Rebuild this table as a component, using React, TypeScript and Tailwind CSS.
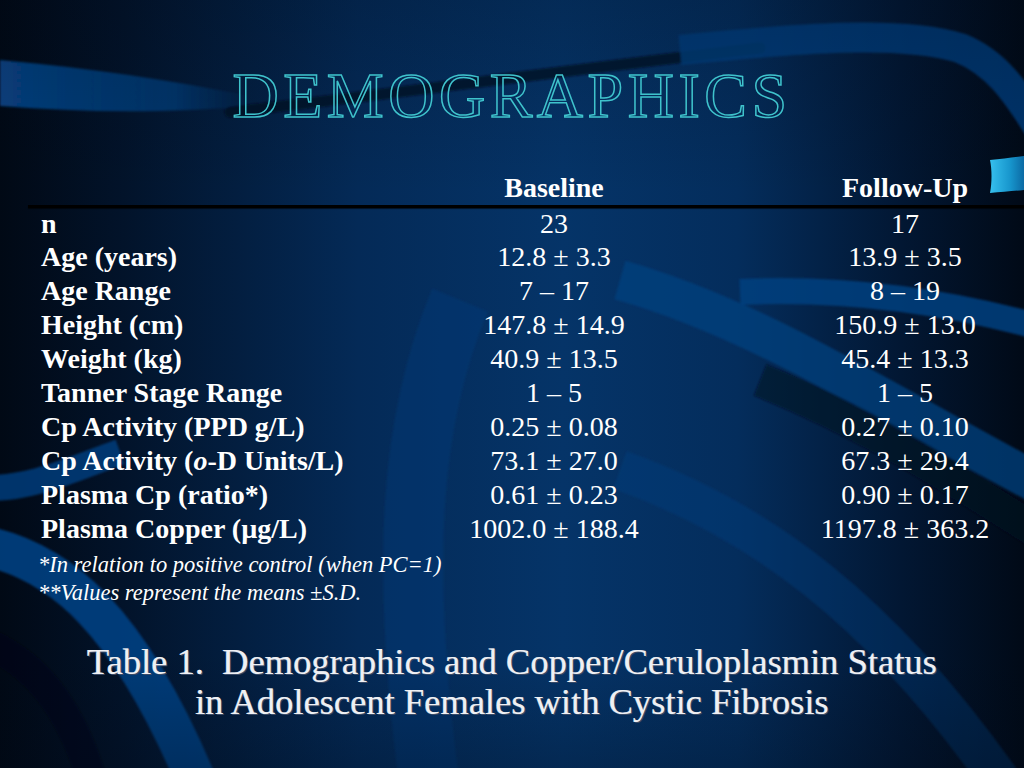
import React from "react";

const rows: [React.ReactNode, string, string][] = [
  ["n", "23", "17"],
  ["Age (years)", "12.8 ± 3.3", "13.9 ± 3.5"],
  ["Age Range", "7 – 17", "8 – 19"],
  ["Height (cm)", "147.8 ± 14.9", "150.9 ± 13.0"],
  ["Weight (kg)", "40.9 ± 13.5", "45.4 ± 13.3"],
  ["Tanner Stage Range", "1 – 5", "1 – 5"],
  ["Cp Activity (PPD g/L)", "0.25 ± 0.08", "0.27 ± 0.10"],
  [
    <>
      Cp Activity (<i>o</i>-D Units/L)
    </>,
    "73.1 ± 27.0",
    "67.3 ± 29.4",
  ],
  ["Plasma Cp (ratio*)", "0.61 ± 0.23", "0.90 ± 0.17"],
  ["Plasma Copper (µg/L)", "1002.0 ± 188.4", "1197.8 ± 363.2"],
];

function Background() {
  return (
    <svg
      className="absolute inset-0"
      width="1024"
      height="768"
      viewBox="0 0 1024 768"
    >
      <defs>
        <linearGradient id="base" x1="0" y1="0" x2="1" y2="0">
          <stop offset="0" stopColor="#010915" />
          <stop offset="0.12" stopColor="#02132a" />
          <stop offset="0.35" stopColor="#042a57" />
          <stop offset="0.55" stopColor="#053468" />
          <stop offset="0.72" stopColor="#042d5c" />
          <stop offset="0.88" stopColor="#021733" />
          <stop offset="1" stopColor="#010a17" />
        </linearGradient>
        <linearGradient id="vshade" x1="0" y1="0" x2="0" y2="1">
          <stop offset="0" stopColor="#000814" stopOpacity="0.2" />
          <stop offset="0.25" stopColor="#000814" stopOpacity="0" />
          <stop offset="0.85" stopColor="#000814" stopOpacity="0" />
          <stop offset="1" stopColor="#000814" stopOpacity="0.25" />
        </linearGradient>
        <linearGradient id="fadeL" x1="0" y1="0" x2="1" y2="0">
          <stop offset="0" stopColor="#074283" stopOpacity="1" />
          <stop offset="0.7" stopColor="#074283" stopOpacity="0.7" />
          <stop offset="1" stopColor="#074283" stopOpacity="0" />
        </linearGradient>
        <filter id="soft" x="-10%" y="-10%" width="120%" height="120%">
          <feGaussianBlur stdDeviation="1" />
        </filter>
      </defs>
      <rect width="1024" height="768" fill="url(#base)" />
      <g filter="url(#soft)">
        {/* top-left band */}
        <path
          d="M 0 60 C 90 68, 170 80, 250 96 L 250 106 C 160 114, 80 112, 0 106 Z"
          fill="url(#fadeL)"
        />
        {/* dark band behind title */}
        <path
          d="M 230 112 C 360 98, 520 76, 760 48"
          fill="none"
          stroke="#010f22"
          strokeOpacity="0.75"
          strokeWidth="11"
          strokeLinecap="round"
        />
        {/* top-right light band */}
        <path
          d="M 680 50 C 800 38, 900 30, 960 48 C 995 62, 1015 90, 1040 130"
          fill="none"
          stroke="#06407f"
          strokeOpacity="0.8"
          strokeWidth="30"
        />
        {/* right mid bands */}
        <path
          d="M 740 292 C 830 288, 930 296, 1050 330"
          fill="none"
          stroke="#06407f"
          strokeOpacity="0.85"
          strokeWidth="26"
        />
        <path
          d="M 620 280 C 760 320, 880 400, 1050 490"
          fill="none"
          stroke="#06407f"
          strokeOpacity="0.75"
          strokeWidth="40"
        />
        <path
          d="M 760 380 C 860 420, 940 470, 1050 540"
          fill="none"
          stroke="#010d1e"
          strokeOpacity="0.55"
          strokeWidth="34"
        />
        <path
          d="M 620 470 C 760 520, 880 610, 1000 780"
          fill="none"
          stroke="#06407f"
          strokeOpacity="0.4"
          strokeWidth="40"
        />
        {/* central ribbon */}
        <path
          d="M 460 300 C 410 420, 400 560, 430 790"
          fill="none"
          stroke="#06407f"
          strokeOpacity="0.35"
          strokeWidth="60"
        />
        {/* left bands */}
        <path
          d="M -20 488 C 30 490, 70 470, 120 452"
          fill="none"
          stroke="#06407f"
          strokeOpacity="0.8"
          strokeWidth="26"
        />
        <path
          d="M -20 545 C 60 560, 130 620, 200 790"
          fill="none"
          stroke="#074386"
          strokeOpacity="0.85"
          strokeWidth="40"
        />
        <path
          d="M -20 640 C 30 660, 70 700, 95 790"
          fill="none"
          stroke="#010a18"
          strokeOpacity="0.45"
          strokeWidth="30"
        />
      </g>
      <rect width="1024" height="768" fill="url(#vshade)" />
    </svg>
  );
}

export default function App() {
  return (
    <div className="relative w-[1024px] h-[768px] overflow-hidden text-white font-['Liberation_Serif','Times_New_Roman',serif]">
      <Background />
      {/* teal ribbon tip at right */}
      <svg
        className="absolute left-[988px] top-[156px]"
        width="36"
        height="38"
        viewBox="0 0 36 38"
      >
        <defs>
          <linearGradient id="tealtip" x1="0" y1="0" x2="1" y2="0">
            <stop offset="0" stopColor="#36c0ee" />
            <stop offset="0.6" stopColor="#1795cc" />
            <stop offset="1" stopColor="#0c6aa4" />
          </linearGradient>
        </defs>
        <path
          d="M 2 4 C 14 3, 26 1, 36 0 L 36 34 C 26 35, 14 36, 2 37 C 4 26, 4 14, 2 4 Z"
          fill="url(#tealtip)"
        />
      </svg>

      <div className="relative flex flex-col">
        <h1 className="mt-[58px] h-[76px] text-center text-[64px] leading-[76px] tracking-[4.5px] text-transparent [-webkit-text-stroke:1.5px_#3fc3cc]">
          DEMOGRAPHICS
        </h1>

        <div className="mt-[37px] flex h-[34px] items-center text-[28px] font-bold leading-[34px]">
          <div className="w-[454px]" />
          <div className="w-[200px] text-center">Baseline</div>
          <div className="ml-[151px] w-[200px] text-center">Follow-Up</div>
        </div>
        <div className="ml-[28px] h-[3px] bg-black shadow-[0_1px_1px_rgba(0,0,0,0.6)]" />

        <div className="flex flex-col text-[28px]">
          {rows.map(([label, a, b], i) => (
            <div
              key={i}
              className={`flex items-center ${i === 0 ? "h-[32px] leading-[32px]" : "h-[34px] leading-[34px]"}`}
            >
              <div className="w-[454px] pl-[41px] font-bold whitespace-nowrap">{label}</div>
              <div className="w-[200px] text-center whitespace-nowrap">{a}</div>
              <div className="ml-[151px] w-[200px] text-center whitespace-nowrap">{b}</div>
            </div>
          ))}
        </div>

        <div className="mt-[5px] pl-[38px] text-[22.5px] italic leading-[28px]">
          <div>*In relation to positive control (when PC=1)</div>
          <div>**Values represent the means ±S.D.</div>
        </div>

        <div className="mt-[35px] text-center text-[36.5px] leading-[40px] text-[#eef0f4] [text-shadow:1px_1px_0_#3a4a66,-0.5px_-0.5px_0_#9aa6bb]">
          <div>Table 1.&nbsp; Demographics and Copper/Ceruloplasmin Status</div>
          <div>in Adolescent Females with Cystic Fibrosis</div>
        </div>
      </div>
    </div>
  );
}
